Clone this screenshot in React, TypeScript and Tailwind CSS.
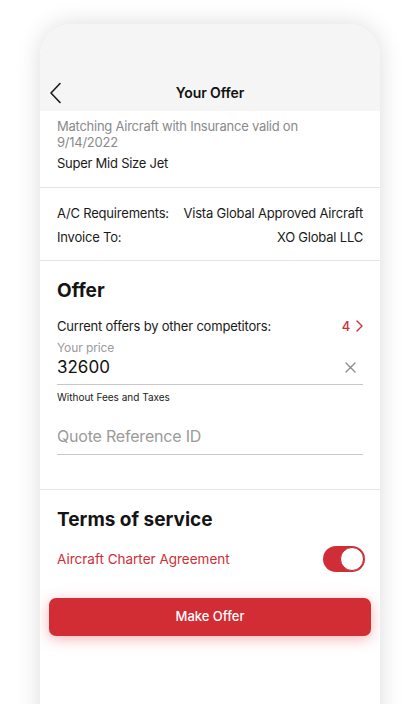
import React from "react";

export default function App() {
  return (
    <div
      className="w-[420px] h-[704px] overflow-hidden bg-white pt-[24px] px-[40px]"
      style={{ fontFamily: "Inter, 'Noto Sans', sans-serif" }}
    >
      <div className="w-[340px] h-[720px] rounded-t-[32px] bg-white shadow-[0_0_24px_rgba(0,0,0,0.14)] overflow-hidden flex flex-col">
        {/* Header */}
        <div className="h-[87px] bg-[#f5f5f5] relative flex items-end justify-center pb-[8px]">
          <svg
            className="absolute left-[9px] bottom-[7px]"
            width="14"
            height="22"
            viewBox="0 0 14 22"
            fill="none"
          >
            <path d="M11 1.5 L2 11 L11 20.5" stroke="#1a1a1a" strokeWidth="1.6" strokeLinecap="round" strokeLinejoin="round" />
          </svg>
          <span className="text-[14px] leading-[20px] font-semibold text-[#111] tracking-[-0.1px]">Your Offer</span>
        </div>

        {/* Aircraft section */}
        <div className="px-[17px] pt-[7px] pb-[16px] border-b border-[#e6e6e6] tracking-[-0.25px]">
          <div className="text-[13px] leading-[16px] text-[#8a8a8a]">
            Matching Aircraft with Insurance valid on
            <br />
            9/14/2022
          </div>
          <div className="mt-[5px] text-[13px] leading-[16px] text-[#1a1a1a]">Super Mid Size Jet</div>
        </div>

        {/* Requirements */}
        <div className="px-[17px] pt-[15px] pb-[13px] border-b border-[#e6e6e6] flex flex-col gap-[4px] text-[13px] leading-[20px] text-[#1a1a1a] tracking-[-0.2px]">
          <div className="flex justify-between">
            <span>A/C Requirements:</span>
            <span>Vista Global Approved Aircraft</span>
          </div>
          <div className="flex justify-between">
            <span>Invoice To:</span>
            <span>XO Global LLC</span>
          </div>
        </div>

        {/* Offer */}
        <div className="px-[17px] pt-[18px] pb-[34px] border-b border-[#e6e6e6]">
          <div className="text-[19px] leading-[24px] font-bold text-[#141414]">Offer</div>
          <div className="mt-[13px] flex justify-between items-center text-[13px] leading-[20px] text-[#1a1a1a] tracking-[-0.2px]">
            <span>Current offers by other competitors:</span>
            <span className="flex items-center gap-[6px] text-[#d12d36] font-medium">
              4
              <svg width="7" height="12" viewBox="0 0 7 12" fill="none">
                <path d="M1 1 L6 6 L1 11" stroke="#d12d36" strokeWidth="1.4" strokeLinecap="round" strokeLinejoin="round" />
              </svg>
            </span>
          </div>
          <div className="mt-[4px] text-[12px] leading-[16px] text-[#9a9a9a] tracking-[-0.1px]">Your price</div>
          <div className="flex justify-between items-center pb-[6px] border-b border-[#c8c8c8]">
            <span className="text-[17px] leading-[22px] text-[#111]">32600</span>
            <svg className="mr-[7px]" width="11" height="11" viewBox="0 0 11 11" fill="none">
              <path d="M1 1 L10 10 M10 1 L1 10" stroke="#8a8a8a" strokeWidth="1.3" strokeLinecap="round" />
            </svg>
          </div>
          <div className="mt-[5px] text-[10px] leading-[14px] text-[#1a1a1a]">Without Fees and Taxes</div>
          <div className="mt-[21px] pb-[7px] border-b border-[#c8c8c8] text-[16px] leading-[22px] text-[#9a9a9a] tracking-[-0.2px]">
            Quote Reference ID
          </div>
        </div>

        {/* Terms */}
        <div className="pt-[18px]">
          <div className="px-[17px] text-[19px] leading-[24px] font-bold text-[#141414]">Terms of service</div>
          <div className="pl-[17px] pr-[15px] mt-[14px] flex justify-between items-center">
            <span className="text-[13.5px] leading-[20px] text-[#d12d36]">Aircraft Charter Agreement</span>
            <div className="w-[42px] h-[26px] rounded-full bg-[#d12d36] flex items-center justify-end pr-[1px]">
              <div className="w-[24px] h-[24px] rounded-full bg-white border border-[#c0282f]" />
            </div>
          </div>
          <div className="mx-[9px] mt-[26px] h-[38px] rounded-[7px] bg-[#d22c35] shadow-[0_3px_14px_rgba(225,40,50,0.35)] flex items-center justify-center">
            <span className="text-[13px] font-medium text-white">Make Offer</span>
          </div>
        </div>
      </div>
    </div>
  );
}
